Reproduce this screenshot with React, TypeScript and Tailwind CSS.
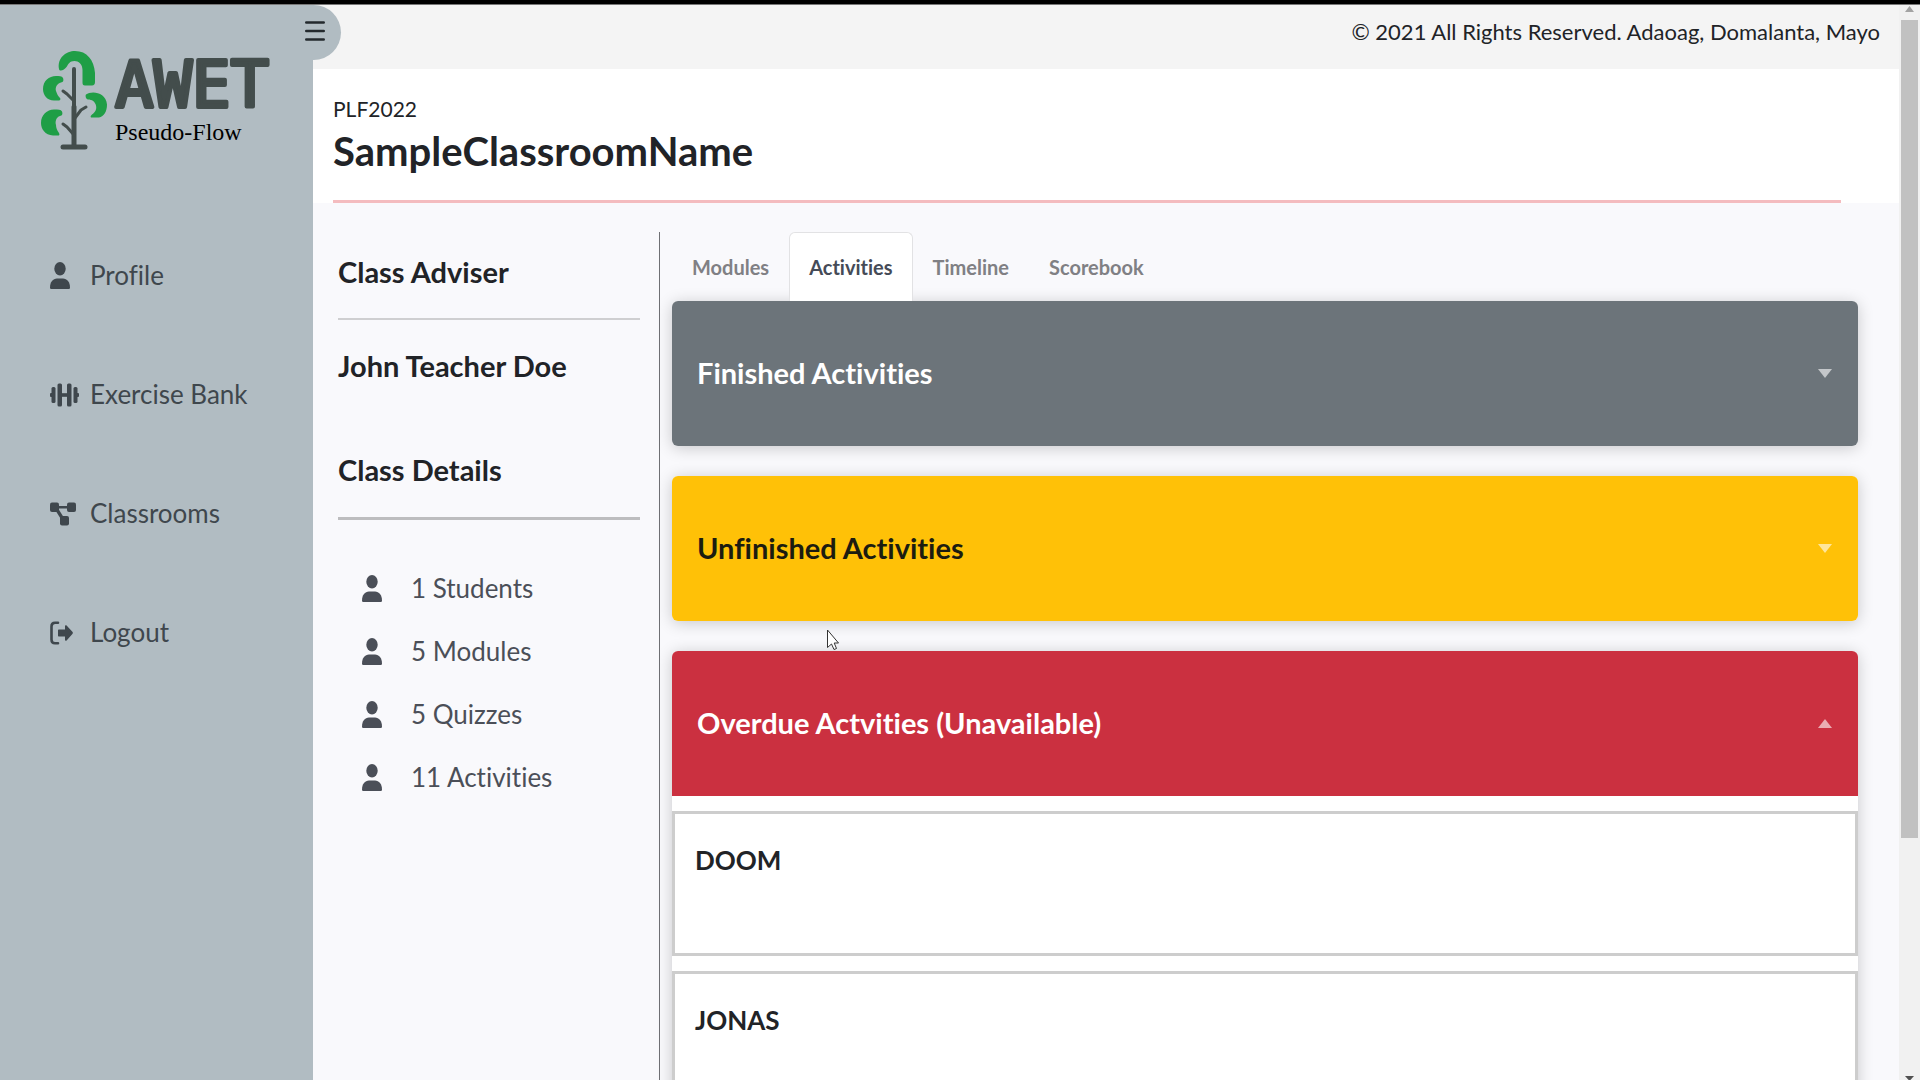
import { useState } from 'react';

type IconProps = { className?: string };

function UserIcon({ className }: IconProps) {
  return (
    <svg viewBox="0 0 20 27" className={className} fill="currentColor" aria-hidden="true">
      <ellipse cx="10" cy="6.700" rx="5.700" ry="6.700" />
      <path d="M0 25.500C0 20 3 16.500 7 16.500h6c4 0 7 3.500 7 9 0 .9-.4 1.500-1.200 1.500H1.200C.4 27 0 26.400 0 25.500Z" />
    </svg>
  );
}

function DumbbellIcon({ className }: IconProps) {
  return (
    <svg viewBox="0 0 29 24" className={className} fill="currentColor" aria-hidden="true">
      <rect x="0" y="10" width="3" height="4" rx="1" />
      <rect x="1.500" y="4" width="4" height="16" rx="1.500" />
      <rect x="7.500" y="0.500" width="4.500" height="23" rx="1.500" />
      <rect x="11" y="10.200" width="7" height="3.600" />
      <rect x="17" y="0.500" width="4.500" height="23" rx="1.500" />
      <rect x="23.500" y="4" width="4" height="16" rx="1.500" />
      <rect x="26" y="10" width="3" height="4" rx="1" />
    </svg>
  );
}

function DiagramIcon({ className }: IconProps) {
  return (
    <svg viewBox="0 0 26 24" className={className} fill="currentColor" aria-hidden="true">
      <rect x="0" y="0.500" width="9" height="9.500" rx="2" />
      <rect x="17" y="0.500" width="9" height="9.500" rx="2" />
      <rect x="10" y="14" width="9" height="9.500" rx="2" />
      <path d="M8 4h10v2.400H8zM5.500 8.500 8.500 7l5 8-3 1.500z" />
    </svg>
  );
}

function LogoutIcon({ className }: IconProps) {
  return (
    <svg viewBox="0 0 23 24" className={className} aria-hidden="true">
      <path d="M8 1.700H5C2.800 1.700 1.500 3.200 1.500 5.500v13c0 2.300 1.300 3.800 3.500 3.800h3" fill="none" stroke="currentColor" strokeWidth="2.600" strokeLinecap="round" />
      <path d="M8 9.500c0-.6.400-1 1-1h6V5.200c0-.9 1-1.300 1.600-.7l6 6.600c.4.500.4 1.200 0 1.700l-6 6.700c-.6.600-1.600.2-1.600-.7v-3.300H9c-.6 0-1-.4-1-1z" fill="currentColor" />
    </svg>
  );
}

function TreeLogo() {
  return (
    <svg viewBox="0 0 66 100" className="mt-[3px] h-[100px] w-[66px] shrink-0" fill="none" aria-hidden="true">
      <g fill="#1f9e46">
        <path d="M18 19C16 8 25 1 34 1c12 0 19 9 20 22v9c0 2-1 3.500-3 3.500h-7c-2 0-2.500-1-2.500-3V20c0-6-4-9-8-9-5 0-6 3-8 6-2 3-7 5-7.500 2z" />
        <path d="M22 28c1 3 0 4-2 4.500-4 1-6 5-5 8.500 1 3 2 5 4 7 1 1 0 2.500-1 2.500h-5C6 50.500 2 45 2 39c0-8 6-13 13-13 3 0 6 0 7 2z" />
        <path d="M21 61.500c1 3 0 4-2 4.500-4 1-5 6-4 9 0 3 1 5 3 8 1 2 0 2.500-1 2.500h-5C4 85 0 79 0 73c0-8 6-13.500 13-13.500 4 0 7 0 8 2z" />
        <path d="M45 44.500c5-4 20-3 21 10 0 7-3 12-8 13h-8c-1-1 0-2 1-3 3-2 5-5 4-9-1-4-4-6-8-6-2 0-3-4-2-5z" />
      </g>
      <g stroke="#434d4c" strokeLinecap="round" strokeLinejoin="round">
        <path d="M33 19v78" strokeWidth="4" />
        <path d="M33 57v38" strokeWidth="5" />
        <path d="M22 97h22" strokeWidth="5" />
        <path d="m22 41 4 3 6 6M45 57l-5 3-6 8M22 74l4 3 7 8" strokeWidth="3" />
      </g>
    </svg>
  );
}

const navItems = [
  { label: 'Profile', Icon: UserIcon, size: 'h-[27px] w-5' },
  { label: 'Exercise Bank', Icon: DumbbellIcon, size: 'h-6 w-[29px]' },
  { label: 'Classrooms', Icon: DiagramIcon, size: 'h-6 w-[26px]' },
  { label: 'Logout', Icon: LogoutIcon, size: 'h-6 w-[23px]' },
];

const details = ['1 Students', '5 Modules', '5 Quizzes', '11 Activities'];
const tabs = ['Modules', 'Activities', 'Timeline', 'Scorebook'];

const sections = [
  { title: 'Finished Activities', tone: 'bg-[#6c747a] text-white', items: [] as string[] },
  { title: 'Unfinished Activities', tone: 'bg-[#ffc107] text-[#1c1c10]', items: [] as string[] },
  { title: 'Overdue Actvities (Unavailable)', tone: 'bg-[#cb3040] text-white', items: ['DOOM', 'JONAS'] },
];

function Sidebar() {
  return (
    <aside className="relative w-[313px] shrink-0 bg-[#b1bcc2] text-[#3f474d]">
      <button
        type="button"
        aria-label="Toggle menu"
        className="absolute top-0 left-full z-10 -ml-[28px] flex h-[55px] w-14 items-center rounded-r-full bg-[#b1bcc2] pb-1 pl-5"
      >
        <svg viewBox="0 0 20 20" className="h-5 w-5" stroke="#23292d" strokeWidth="2.600" strokeLinecap="round" aria-hidden="true">
          <path d="M1.300 1.500h17.400M1.300 10h17.400M1.300 18.500h17.400" />
        </svg>
      </button>
      <div className="flex items-start gap-2 pt-[42px] pl-[41px]">
        <TreeLogo />
        <div className="flex flex-col">
          <svg viewBox="0 0 170 75" className="h-[75px] w-[170px] overflow-visible" role="img" aria-label="AWET">
            <text
              x="0"
              y="60"
              fontSize="64"
              fill="#434d4c"
              stroke="#434d4c"
              strokeWidth="4"
              strokeLinejoin="round"
              className="font-['DejaVu_Sans_Mono',monospace]"
            >
              AWET
            </text>
          </svg>
          <span className="font-['Liberation_Serif',serif] text-2xl leading-5 text-black">Pseudo-Flow</span>
        </div>
      </div>
      <nav className="mt-[66px] flex flex-col">
        {navItems.map(({ label, Icon, size }) => (
          <a key={label} href="#" className="flex h-[119px] items-center pl-[50px] text-[26px]">
            <span className="flex w-10 items-center">
              <Icon className={size} />
            </span>
            {label}
          </a>
        ))}
      </nav>
    </aside>
  );
}

function ClassInfo() {
  return (
    <section className="w-[347px] shrink-0 border-r border-[#6f7074] pr-[19px] pl-[25px]">
      <h2 className="pt-5 text-[29px] leading-10 font-bold">Class Adviser</h2>
      <hr className="mt-[26px] border-t-2 border-[#cfcfd1]" />
      <p className="mt-[26px] text-[29px] leading-10 font-bold">John Teacher Doe</p>
      <h2 className="mt-16 text-[29px] leading-10 font-bold">Class Details</h2>
      <hr className="mt-[27px] border-t-[3px] border-[#bdbdbf]" />
      <ul className="mt-[37px] text-[26px] text-[#4b4f58]">
        {details.map((d) => (
          <li key={d} className="flex h-[63px] items-center pl-6">
            <UserIcon className="mr-[29px] h-[27px] w-5" />
            {d}
          </li>
        ))}
      </ul>
    </section>
  );
}

function Accordion() {
  const [open, setOpen] = useState(2);
  return (
    <div className="flex flex-col gap-[30px]">
      {sections.map((s, i) => (
        <article key={s.title} className="overflow-hidden rounded-md bg-white shadow-[0_2px_16px_rgba(0,0,0,0.2)]">
          <button
            type="button"
            aria-expanded={open === i}
            onClick={() => setOpen(open === i ? -1 : i)}
            className={`flex h-[145px] w-full items-center justify-between pr-[26px] pb-px pl-[25px] text-[29px] font-bold ${s.tone}`}
          >
            {s.title}
            <svg viewBox="0 0 14 9" className={`h-[9px] w-[14px] ${open === i ? 'rotate-180' : ''}`} aria-hidden="true">
              <path d="M0 0h14L7 9z" fill="#fff" fillOpacity="0.6" />
            </svg>
          </button>
          {open === i &&
            s.items.map((name) => (
              <div key={name} className="mt-[15px] h-[145px] border-[3px] border-[#cdcdcd] px-5 pt-[26px] text-[26px] leading-10 font-bold">
                {name}
              </div>
            ))}
        </article>
      ))}
    </div>
  );
}

function Scrollbar() {
  return (
    <div className="flex w-[21px] shrink-0 flex-col items-center bg-[#f1f1f1]" aria-hidden="true">
      <svg viewBox="0 0 21 15" className="h-[15px] w-[21px]">
        <path d="M6 7h9l-4.500-6z" fill="#a3a3a3" />
      </svg>
      <div className="flex min-h-0 flex-1 flex-col">
        <div className="w-[17px] flex-[818] bg-[#c1c1c1]" />
        <div className="flex-[237]" />
      </div>
      <svg viewBox="0 0 21 5" className="h-[5px] w-[21px]">
        <path d="M6 1h9l-4.500 5z" fill="#505050" />
      </svg>
    </div>
  );
}

export default function App() {
  const [tab, setTab] = useState('Activities');
  return (
    <div className="flex h-screen flex-col overflow-hidden bg-[#f9f9fc] font-['Lato','Noto_Sans',sans-serif] text-[#212327] [font-variant-ligatures:none]">
      <div className="h-[5px] shrink-0 border-b border-[#777] bg-black" />
      <div className="flex min-h-0 flex-1">
        <Sidebar />
        <main className="min-w-0 flex-1 overflow-hidden">
          <header className="flex h-16 justify-end bg-[#f4f4f4] pt-[9px] pr-[19px] text-[22px] leading-9">
            © 2021 All Rights Reserved. Adaoag, Domalanta, Mayo
          </header>
          <div className="bg-white pt-6 pr-[58px] pl-5">
            <p className="text-[21px] leading-8">PLF2022</p>
            <h1 className="text-[40px] leading-[52px] font-bold">SampleClassroomName</h1>
            <hr className="mt-[23px] border-t-[3px] border-[#f4bcbf]" />
          </div>
          <div className="flex pt-[29px]">
            <ClassInfo />
            <section className="min-w-0 flex-1 pr-[41px] pb-12 pl-3">
              <div role="tablist" className="flex">
                {tabs.map((t) => (
                  <button
                    key={t}
                    type="button"
                    role="tab"
                    aria-selected={t === tab}
                    onClick={() => setTab(t)}
                    className={`h-[69px] rounded-t-md border border-b-0 px-[19px] text-xl font-bold ${
                      t === tab ? 'relative z-10 border-[#e2e2e4] bg-white text-[#454b57]' : 'border-transparent text-[#808084]'
                    }`}
                  >
                    {t}
                  </button>
                ))}
              </div>
              <Accordion />
            </section>
          </div>
        </main>
        <Scrollbar />
      </div>
      <svg viewBox="0 0 12 21" className="pointer-events-none absolute top-[629px] left-[827px] z-20 h-[21px] w-3" aria-hidden="true">
        <path d="M.5 1v17.500l4-3.500 2.500 5.500 2.500-1-2.300-5.500h4.300z" fill="#fff" stroke="#333" />
      </svg>
    </div>
  );
}
